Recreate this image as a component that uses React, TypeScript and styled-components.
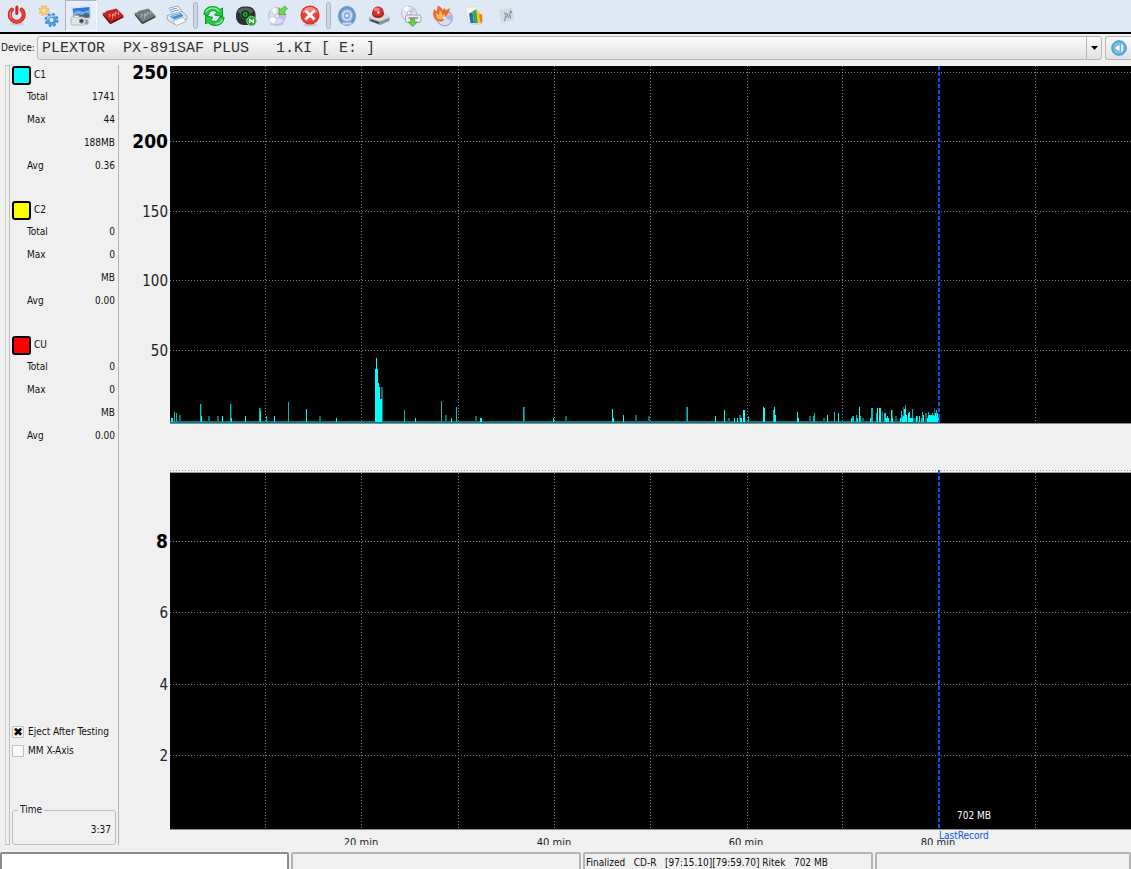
import React, { useState } from 'react';
import styled, { createGlobalStyle, css } from 'styled-components';

const UI_FONT = '"DejaVu Sans Condensed", "Noto Sans", "Open Sans", sans-serif';

const GlobalStyle = createGlobalStyle`
  *, *::before, *::after { box-sizing: border-box; }
  body {
    margin: 0;
    background: #f0f0f0;
    color: #111;
    font: 10px/14px ${UI_FONT};
    overflow: hidden;
  }
  button, select, input { font: inherit; color: inherit; }
`;

const Window = styled.div`
  display: flex;
  flex-direction: column;
  height: 100vh;
`;

const Toolbar = styled.header`
  display: flex;
  flex: none;
  height: 34px;
  padding: 0 1px;
  background: #dfe8f5;
  border-bottom: 2px solid #000;
`;

const ToolButton = styled.button<{ $pressed?: boolean }>`
  display: flex;
  align-items: center;
  justify-content: center;
  width: 32px;
  height: 31px;
  padding: 0;
  border: 1px solid transparent;
  background: none;
  ${(p) =>
    p.$pressed &&
    css`
      background: #e6edf7;
      border-color: #a9b3c0 #f6f9fd #f6f9fd #a9b3c0;
    `}
  svg { display: block; }
`;

const Separator = styled.span`
  width: 5px;
  height: 27px;
  margin-top: 2px;
  border: 1px solid #aab4c2;
  border-radius: 3px;
  background: #ccd6e4;
`;

const DeviceRow = styled.div`
  display: flex;
  flex: none;
  align-items: center;
  height: 31px;
  padding: 0 0 3px 1px;
  gap: 3px;
`;

const DeviceLabel = styled.label`
  width: 33px;
  white-space: nowrap;
`;

const SelectFrame = styled.div`
  display: flex;
  position: relative;
  flex: 1;
  height: 24px;
  border: 1px solid #b6b6b6;
  border-radius: 3px;
  background: linear-gradient(#fafafa, #e2e2e2);
`;

const DeviceSelect = styled.select`
  flex: 1;
  padding: 2px 20px 0 4px;
  border: 0;
  outline: 0;
  appearance: none;
  background: none;
  color: #333;
  font: 15px/20px "Liberation Mono", monospace;
`;

const SelectArrow = styled.span`
  position: absolute;
  top: 0;
  right: 0;
  bottom: 0;
  display: flex;
  align-items: center;
  justify-content: center;
  width: 15px;
  border-left: 1px solid #b6b6b6;
  pointer-events: none;
`;

const BackButton = styled.button`
  display: flex;
  align-items: center;
  width: 26px;
  height: 24px;
  padding: 0 0 0 5px;
  border: 1px solid #b6b6b6;
  border-right: 0;
  border-radius: 3px 0 0 3px;
  background: linear-gradient(#fafafa, #e2e2e2);
`;

const Main = styled.main`
  display: flex;
  flex: 1;
  min-height: 0;
  padding-bottom: 7px;
`;

const Grip = styled.div`
  flex: none;
  width: 5px;
  margin-left: 5px;
  border: 1px solid #bcbcbc;
  border-left-color: #cfcfcf;
`;

const Sidebar = styled.aside`
  display: flex;
  flex: none;
  flex-direction: column;
  width: 109px;
  padding: 0 2px;
  border-right: 1px solid #b4b4b4;
`;

const Group = styled.section`
  margin-bottom: 23px;
`;

const GroupHead = styled.div`
  display: flex;
  align-items: center;
  gap: 3px;
  height: 20px;
`;

const Swatch = styled.button<{ $color: string }>`
  width: 19px;
  height: 19px;
  padding: 0;
  border: 2px solid #000;
  border-radius: 3px;
  background: ${(p) => p.$color};
`;

const StatRow = styled.div`
  display: flex;
  align-items: center;
  justify-content: space-between;
  height: 23px;
  padding: 0 1px 0 15px;
`;

const Spacer = styled.div`
  flex: 1;
`;

const CheckLabel = styled.label`
  display: flex;
  align-items: center;
  gap: 4px;
  height: 19px;
  white-space: nowrap;
`;

const CheckBox = styled.input`
  display: grid;
  place-content: center;
  width: 12px;
  height: 12px;
  margin: 0;
  border: 1px solid #c0c0c0;
  border-radius: 1px;
  appearance: none;
  background: #fafafa;
  &:checked::after {
    content: '✖';
    font: 12px/10px "DejaVu Sans", sans-serif;
    color: #000;
  }
`;

const TimeBox = styled.fieldset`
  height: 41px;
  margin: 44px 0 0;
  padding: 7px 4px 0;
  border: 1px solid #bdbdbd;
  border-radius: 3px;
  text-align: right;
`;

const TimeLegend = styled.legend`
  margin-left: 1px;
  padding: 0 2px;
  line-height: 12px;
  text-align: left;
`;

const Charts = styled.div`
  display: flex;
  flex: 1;
  flex-direction: column;
  min-width: 0;
`;

const Plot = styled.svg<{ $grow?: boolean }>`
  display: block;
  width: 100%;
  height: 405px;
  flex: ${(p) => (p.$grow ? '1 1 0' : 'none')};
  min-height: 0;
  overflow: hidden;
  font-family: ${UI_FONT};
`;

const StatusBar = styled.footer`
  display: grid;
  flex: none;
  grid-template-columns: 289px 290px 290px 1fr;
  gap: 2px;
  height: 17px;
  overflow: hidden;
`;

const StatusCell = styled.div<{ $field?: boolean }>`
  height: 20px;
  padding: 2px 1px 0;
  border: 2px solid #b4b4b4;
  border-radius: 2px;
  background: ${(p) => (p.$field ? '#fff' : '#f0f0f0')};
  ${(p) => p.$field && 'border-color: #8c8c8c;'}
  line-height: 14px;
  white-space: pre;
`;

/* ---------- toolbar icons ---------- */

const Ic = ({ children }: { children: React.ReactNode }) => (
  <svg width="22" height="22" viewBox="0 0 22 22" fill="none" aria-hidden="true">{children}</svg>
);

const PowerIcon = () => (
  <Ic>
    <ellipse cx="11" cy="19" rx="7" ry="1.500" fill="#c4ccd8" />
    <path d="M6 4.500A7 7 0 1 0 15.500 4.500" stroke="#c51c14" strokeWidth="4" strokeLinecap="round" />
    <path d="M6 4.500A7 7 0 1 0 15.500 4.500" stroke="#ee3f34" strokeWidth="2.600" strokeLinecap="round" />
    <path d="M4.500 7A7 7 0 0 0 5 13" stroke="#fa9a90" strokeWidth="1" strokeLinecap="round" />
    <path d="M10.800 2v6.500" stroke="#dfe8f5" strokeWidth="5" strokeLinecap="round" />
    <path d="M10.800 2v6.500" stroke="#d8281e" strokeWidth="3" strokeLinecap="round" />
  </Ic>
);

const GearsIcon = () => (
  <Ic>
    <circle cx="6" cy="5.500" r="4.400" stroke="#f2b24a" strokeWidth="1.800" strokeDasharray="2 1.455" />
    <circle cx="6" cy="5.500" r="2.800" stroke="#fac76a" strokeWidth="2.400" />
    <circle cx="13.500" cy="15" r="6" stroke="#3a86d4" strokeWidth="2" strokeDasharray="2.700 2.010" />
    <circle cx="13.500" cy="15" r="3.700" stroke="#4f9ce6" strokeWidth="3.400" />
    <path d="M9.600 14A4 4 0 0 1 15 11.300" stroke="#a5d2f8" strokeWidth="1.600" strokeLinecap="round" />
    <circle cx="13.500" cy="15" r="1.700" fill="#e6eef8" />
  </Ic>
);

const ScreenIcon = () => (
  <Ic>
    <path d="M1.500 2.500L20.500 1V13.500L3 15Z" fill="#f7fafd" stroke="#c3cfdd" strokeWidth="0.600" />
    <path d="M2.500 3.500L19.500 2V12.500L4 14Z" fill="#2f78d4" />
    <path d="M3 7.500L8 5.500L13 7L19.500 5V9.500L3.600 11.500Z" fill="#79b0ea" />
    <path d="M3.600 11L8 9L12 10L16 7.500L19.500 9V12.500L4 14Z" fill="#51657a" />
    <path d="M14 14.500H18.500V19.500H14Z" fill="#9da2a8" />
    <rect x="1" y="12" width="13.500" height="8" rx="1.500" fill="#e2e4e6" stroke="#a2a6ab" strokeWidth="0.700" />
    <path d="M4 12V10.500H9V12" fill="#eceeef" stroke="#a2a6ab" strokeWidth="0.700" />
    <circle cx="11.500" cy="16" r="3.200" fill="#8a9096" stroke="#f0f1f2" strokeWidth="1" />
    <circle cx="11.500" cy="16" r="1.500" fill="#33383d" />
  </Ic>
);

const ChipIcon = ({ top, side, mark }: { top: string; side: string; mark: string }) => (
  <Ic>
    <path d="M0.500 8L9 16L21.500 10.500V12.500L9 19L7.500 18.500L1 10.500Z" fill={side} />
    <path d="M0.500 7.500Q3.500 8.500 4.500 6L14.500 3.500L21.500 10.500L8.500 17Z" fill={top} />
    <path d="M8.500 9l-1.700.6l1.800 1.200l-1.600.8M10.500 13.500V9l1.700.500l-1.500 1.500M13 11.500V7.500l1.800.300l-1 1.200M16.500 6.500V10" stroke={mark} strokeWidth="0.800" />
  </Ic>
);

const PrinterIcon = () => (
  <Ic>
    <path d="M3 3L12 1L17 8L8 11Z" fill="#f7fafd" stroke="#7e98b8" strokeWidth="0.800" />
    <path d="M5 4.500L11 3.200M6 6.500L13 4.800" stroke="#6a9bd4" strokeWidth="1" />
    <path d="M1 10.500L16 6.500L21 11V14L9 19.500L1.500 15Z" fill="#dde4ed" stroke="#8e9db0" strokeWidth="0.800" />
    <path d="M4 11.200L14.500 8L17.500 11L8 14.500Z" fill="#3e93de" />
    <path d="M6 11.500L14 9" stroke="#9accf6" strokeWidth="1" />
    <path d="M7 16L17 12.200L20 16.500L10 20.500Z" fill="#f9fbfd" stroke="#9aa8ba" strokeWidth="0.800" />
  </Ic>
);

const RefreshIcon = () => (
  <Ic>
    <g stroke="#0a8a22" strokeWidth="0.900" fill="#22cf3c" strokeLinejoin="round">
      <path d="M0.800 9.500Q1.500 1.500 9.500 1.500Q14.500 1.500 17 4.500L19.500 3V11.500L11.500 10L14 7.500Q12 5 9 5.500Q6 6 5 10.500Z" />
      <path d="M21.200 12.500Q20 20.500 12 20.500Q7.500 20.500 5 17.500L2.500 19V10.500L10 12.500L7.800 14.500Q9.500 17 12.500 16.500Q15.500 16 17 11.500Z" />
    </g>
    <path d="M3 7Q5 3 9.500 3Q13.500 3 16 6M19.500 14.500Q17.500 19 12.500 19" stroke="#a5f7ac" strokeWidth="1.100" />
  </Ic>
);

const BlackDiscIcon = () => (
  <Ic>
    <rect x="1" y="1.500" width="19.500" height="18.500" rx="8" fill="#2c2f31" />
    <path d="M2.500 7Q4 2.500 10.500 2.500Q16.500 2.500 18.500 7L10.500 10Z" fill="#5d6164" />
    <circle cx="10.300" cy="9.500" r="4.600" fill="#14301a" stroke="#1d7d2b" strokeWidth="1" />
    <circle cx="10.300" cy="9.500" r="2.400" fill="#2fae40" />
    <circle cx="10.300" cy="9.500" r="0.900" fill="#0d2612" />
    <circle cx="16.500" cy="16" r="4.800" fill="#2fa53b" stroke="#8ed295" strokeWidth="0.900" />
    <path d="M14.800 18V14.500L18.300 17.500V14" stroke="#fff" strokeWidth="1.200" />
  </Ic>
);

const DiscArrowIcon = () => (
  <Ic>
    <ellipse cx="10" cy="19" rx="7" ry="1.800" fill="#c0c8d6" />
    <circle cx="10" cy="11" r="8.500" fill="#dddcf3" stroke="#b4b2d0" strokeWidth="0.900" />
    <path d="M10 11L2 14A8.500 8.500 0 0 0 7 19Z" fill="#fff" />
    <path d="M10 11L18 9A8.500 8.500 0 0 1 17 16Z" fill="#c0bfe9" />
    <path d="M10 11L4 5A8.500 8.500 0 0 1 9 2.500Z" fill="#f6f6fd" />
    <circle cx="10" cy="11" r="2.200" fill="#f4f5fb" stroke="#a5a4c2" strokeWidth="0.900" />
    <path d="M20.500 3.500L17 7L18.800 9.500H12V3L13.800 4.700L17.500 1Z" fill="#6fd84e" stroke="#48a834" strokeWidth="0.800" />
  </Ic>
);

const StopIcon = () => (
  <Ic>
    <ellipse cx="11" cy="20" rx="7" ry="1.500" fill="#c0c8d6" />
    <circle cx="11" cy="10" r="9.500" fill="#d42a1c" />
    <circle cx="11" cy="10" r="8.500" fill="#ea4332" />
    <path d="M3 8Q5 2 11 2Q17 2 19 8Q11 5 3 8Z" fill="#f58a7a" />
    <path d="M7.500 6.500L14.500 13.500M14.500 6.500L7.500 13.500" stroke="#fff" strokeWidth="3" strokeLinecap="square" />
  </Ic>
);

const BlueDiscIcon = () => (
  <Ic>
    <ellipse cx="11" cy="11" rx="9" ry="10" fill="#6795ce" />
    <ellipse cx="11" cy="10.500" rx="6.500" ry="7" fill="#86aad8" />
    <ellipse cx="11" cy="10.500" rx="4.200" ry="4.500" stroke="#c9dbef" strokeWidth="2.200" fill="#86aad8" />
    <circle cx="11" cy="10.500" r="1.600" fill="#e4eef8" />
    <path d="M6 17.500H16L15 19.500H7Z" fill="#cfdff0" />
  </Ic>
);

const DriveIcon = () => (
  <Ic>
    <path d="M1 13L6 8.500H17L21.500 12.500V16L12 20L1 16Z" fill="#8e9297" />
    <path d="M1 13L6 8.500H17L21.500 12.500L12 16.500Z" fill="#d8dadd" />
    <path d="M3 15.300L11 18" stroke="#3c4044" strokeWidth="1.400" />
    <ellipse cx="10" cy="8.500" rx="6" ry="4.500" fill="#a31d20" />
    <ellipse cx="10" cy="6.500" rx="5.500" ry="5" fill="#d42c30" />
    <ellipse cx="8.800" cy="4.500" rx="3" ry="1.900" fill="#ee7d7a" />
    <circle cx="10.500" cy="7.500" r="1.500" fill="#f4c9c9" />
  </Ic>
);

const DiscDownIcon = () => (
  <Ic>
    <circle cx="9" cy="8.500" r="7.500" fill="#e6e6f3" stroke="#b4b5c8" strokeWidth="0.900" />
    <path d="M9 8.500L3 4A7.500 7.500 0 0 1 8 1Z" fill="#fff" />
    <path d="M9 8.500L16 6A7.500 7.500 0 0 0 12 1.700Z" fill="#cdccec" />
    <circle cx="9" cy="8" r="2" fill="#f8f8fc" stroke="#aaaac2" strokeWidth="0.900" />
    <rect x="5.500" y="10" width="15.500" height="7.500" rx="2" fill="#eceef2" stroke="#9aa0aa" strokeWidth="0.900" />
    <path d="M8.500 13H18" stroke="#6b717c" strokeWidth="1.200" />
    <path d="M10.700 14H14.700V17H17.500L12.700 21.500L8 17H10.700Z" fill="#6ad04a" stroke="#46a030" strokeWidth="0.800" />
  </Ic>
);

const BurnIcon = () => (
  <Ic>
    <circle cx="12.500" cy="13" r="7.800" fill="#dcdcf0" stroke="#8c8cae" strokeWidth="0.900" />
    <path d="M12.500 13L19 9A7.800 7.800 0 0 1 19.500 16Z" fill="#b6b6e0" />
    <path d="M2.500 13.500Q0 9 2 4L4.500 6.500Q6 3 5.500 0.500Q10 2 10.500 5.500L12.500 3L14 5.500L17.500 3Q18 8 14.500 10.500Q14 15 9.500 16.500Q5 17 2.500 13.500Z" fill="#f0692c" />
    <path d="M4.500 12.500Q3.500 10 4.500 8L7 10Q8 7 7.500 4.500Q10.500 7.500 10 10.500L13 8.500Q12.500 12.500 10 14Q6.500 15.500 4.500 12.500Z" fill="#fcb868" />
    <circle cx="12.500" cy="13" r="1.700" fill="#fff" stroke="#a9a9c6" strokeWidth="0.600" />
  </Ic>
);

const BarsIcon = () => (
  <Ic>
    <path d="M1.500 2.500L12.500 1.500L14.500 17L4.500 18.500Z" fill="#f6f9ee" stroke="#d0d9df" strokeWidth="0.800" />
    <path d="M5 8.500L8.500 7L10 18H6.500Z" fill="#2469cc" />
    <path d="M8.500 6L12.500 4.500L14 18H10Z" fill="#45a83a" />
    <path d="M12.500 6.500L15.500 6L17 17.500L14 18Z" fill="#f4cc38" />
    <path d="M15 9.500L18 9L18.500 17L16.500 18Z" fill="#ee7a1c" />
    <path d="M6.500 18H18.500L17 20H8.500Z" fill="#ccd4de" />
  </Ic>
);

const ScriptIcon = () => (
  <Ic>
    <path d="M3 4.500L16 3L18.500 15L5 18.500Z" fill="#d3dbe1" />
    <path d="M8 9q2.500-3 2 1l-1.500 6M9 12.500q2.500 0 3-4M12 13.500q2.500-4 2.500-8M14.500 13.500v-3M14 7q2-2 1.500 1" stroke="#7b8893" strokeWidth="1" />
  </Ic>
);

const TOOLS: Array<null | { name: string; icon: React.ReactNode; pressed?: boolean }> = [
  { name: 'Quit', icon: <PowerIcon /> },
  { name: 'Settings', icon: <GearsIcon /> },
  { name: 'Screenshot', icon: <ScreenIcon />, pressed: true },
  { name: 'Red chip', icon: <ChipIcon top="#c4221d" side="#6f0f0c" mark="#f4b0a8" /> },
  { name: 'Grey chip', icon: <ChipIcon top="#777b7e" side="#45484a" mark="#b8bcc0" /> },
  { name: 'Print', icon: <PrinterIcon /> },
  null,
  { name: 'Refresh', icon: <RefreshIcon /> },
  { name: 'Disc info', icon: <BlackDiscIcon /> },
  { name: 'Load disc', icon: <DiscArrowIcon /> },
  { name: 'Stop', icon: <StopIcon /> },
  null,
  { name: 'Disc', icon: <BlueDiscIcon /> },
  { name: 'Drive', icon: <DriveIcon /> },
  { name: 'Read disc', icon: <DiscDownIcon /> },
  { name: 'Burn', icon: <BurnIcon /> },
  { name: 'Graph', icon: <BarsIcon /> },
  { name: 'Script', icon: <ScriptIcon /> },
];

/* ---------- chart data ---------- */

const BRIGHT = '#00ffff';
const MID = '#00bebe';
const DIM = '#007474';

// [x, height, width, shade]; x is counted from the left edge of the plot
type Bar = [number, number, number, string];
const BARS: Bar[] = [
  [1, 4, 2, BRIGHT], [4, 10, 1, MID], [6, 9, 1, MID], [9, 7, 2, DIM],
  [30, 18, 1, MID], [31, 18, 1, '#004444'], [31, 6, 1, BRIGHT], [38, 6, 2, DIM], [47, 6, 2, DIM], [52, 6, 1, BRIGHT],
  [60, 18, 1, MID], [61, 18, 1, '#004444'], [61, 4, 1, BRIGHT], [75, 6, 1, BRIGHT], [89, 14, 1, MID], [90, 14, 1, DIM],
  [90, 11, 1, BRIGHT], [96, 6, 1, MID], [104, 6, 1, BRIGHT], [118, 20, 1, MID], [136, 13, 1, BRIGHT],
  [149, 6, 2, DIM], [166, 4, 1, BRIGHT],
  [205, 53, 1, BRIGHT], [206, 64, 1, BRIGHT], [207, 53, 1, BRIGHT], [208, 39, 1, BRIGHT], [209, 35, 1, BRIGHT],
  [211, 35, 2, DIM], [210, 23, 2, BRIGHT],
  [234, 12, 1, MID], [245, 4, 1, BRIGHT], [271, 21, 1, MID], [275, 7, 2, DIM], [281, 4, 1, BRIGHT],
  [286, 15, 1, MID], [305, 6, 2, DIM], [310, 4, 2, BRIGHT],
  [353, 15, 1, MID], [354, 15, 1, DIM], [383, 4, 1, BRIGHT], [395, 6, 2, DIM],
  [442, 13, 1, BRIGHT], [443, 4, 1, BRIGHT], [453, 7, 1, BRIGHT], [465, 7, 2, DIM], [478, 6, 2, DIM],
  [516, 15, 1, DIM], [517, 15, 1, MID], [545, 6, 1, BRIGHT], [554, 12, 1, BRIGHT], [558, 4, 2, DIM],
  [564, 4, 1, BRIGHT], [567, 4, 1, BRIGHT], [569, 7, 2, DIM], [570, 4, 2, BRIGHT], [573, 12, 2, BRIGHT], [578, 6, 1, MID],
  [593, 15, 1, BRIGHT], [594, 14, 1, BRIGHT], [603, 12, 1, MID], [604, 15, 1, BRIGHT], [605, 7, 1, BRIGHT],
  [627, 10, 1, BRIGHT], [628, 4, 1, BRIGHT], [639, 6, 2, DIM], [643, 6, 1, MID], [644, 9, 1, MID],
  [653, 4, 2, DIM], [657, 7, 1, BRIGHT], [664, 10, 1, MID], [668, 9, 1, BRIGHT],
  [681, 4, 1, BRIGHT], [682, 6, 2, MID], [686, 7, 1, MID], [687, 4, 1, BRIGHT], [689, 15, 1, BRIGHT], [690, 6, 1, MID], [692, 4, 2, DIM],
  [700, 4, 1, BRIGHT], [701, 14, 2, MID], [706, 9, 1, MID], [707, 14, 1, BRIGHT], [709, 14, 2, BRIGHT], [712, 10, 1, DIM],
  [714, 9, 1, MID], [715, 9, 1, BRIGHT], [716, 4, 1, BRIGHT], [717, 6, 1, BRIGHT], [718, 4, 1, BRIGHT],
  [721, 12, 1, BRIGHT], [722, 12, 1, DIM], [722, 4, 1, BRIGHT], [725, 6, 2, DIM],
  [730, 4, 1, BRIGHT], [731, 11, 1, MID], [732, 7, 1, MID], [732, 4, 2, BRIGHT], [733, 15, 1, DIM], [734, 13, 1, BRIGHT], [735, 17, 1, MID],
  [733, 6, 1, BRIGHT], [735, 13, 1, BRIGHT],
  [736, 7, 1, BRIGHT], [738, 9, 1, BRIGHT], [739, 10, 1, BRIGHT], [740, 4, 1, BRIGHT], [742, 13, 1, MID], [741, 4, 2, BRIGHT],
  [743, 4, 4, DIM], [746, 6, 1, BRIGHT], [747, 6, 1, MID], [749, 6, 1, BRIGHT], [751, 4, 1, MID], [752, 10, 1, MID], [753, 7, 1, BRIGHT],
  [755, 9, 2, DIM], [757, 4, 1, BRIGHT], [758, 10, 1, MID], [759, 7, 4, BRIGHT], [762, 9, 1, MID], [763, 7, 6, BRIGHT],
  [764, 14, 1, DIM], [765, 9, 1, BRIGHT], [766, 12, 1, MID], [767, 9, 1, BRIGHT], [758, 6, 10, BRIGHT],
];

const LEFT = 51;
const VERTICALS = [146, 242, 339, 435, 531, 628, 723, 916];
const RECORD_X = 820;

interface YTick {
  y: number;
  text: string;
  bold?: boolean;
}

const UPPER: YTick[] = [
  { y: 7, text: '250', bold: true },
  { y: 76, text: '200', bold: true },
  { y: 146, text: '150' },
  { y: 215, text: '100' },
  { y: 285, text: '50' },
];

const LOWER: YTick[] = [
  { y: 71, text: '8', bold: true },
  { y: 142, text: '6' },
  { y: 214, text: '4' },
  { y: 285, text: '2' },
];

const X_TICKS = [
  { x: 242, text: '20 min' },
  { x: 435, text: '40 min' },
  { x: 627, text: '60 min' },
  { x: 819, text: '80 min' },
];

const Grid = ({ ticks, top, bottom }: { ticks: YTick[]; top: number; bottom: number }) => (
  <>
    <rect x={LEFT} y={top} width="100%" height={bottom - top} fill="#000" />
    <g stroke="#7c7c7c" strokeDasharray="1 2" shapeRendering="crispEdges">
      {ticks.map((t) => (
        <line key={t.text} x1={LEFT} x2="100%" y1={t.y + 0.5} y2={t.y + 0.5} />
      ))}
      {VERTICALS.map((x) => (
        <line key={x} x1={x + 0.5} x2={x + 0.5} y1={top} y2={bottom} />
      ))}
    </g>
    <line x1={LEFT} x2="100%" y1={bottom + 0.5} y2={bottom + 0.5} stroke="#8a8a8a" />
    {ticks.map((t) => (
      <text
        key={t.text}
        x={LEFT - 2}
        y={t.bold ? t.y + 7 : t.y + 6}
        textAnchor="end"
        fontSize={t.bold ? 19 : 15}
        fontWeight={t.bold ? 700 : 400}
        fill={t.bold ? '#000' : '#222'}
      >
        {t.text}
      </text>
    ))}
  </>
);

const RecordLine = ({ top, bottom }: { top: number; bottom: number }) => (
  <line x1={RECORD_X} x2={RECORD_X} y1={top} y2={bottom} stroke="#0a55f0" strokeWidth="2" strokeDasharray="4 2" />
);

const GROUPS = [
  { name: 'C1', color: '#00ffff', total: '1741', max: '44', at: '188MB', avg: '0.36' },
  { name: 'C2', color: '#ffff00', total: '0', max: '0', at: 'MB', avg: '0.00' },
  { name: 'CU', color: '#ff0000', total: '0', max: '0', at: 'MB', avg: '0.00' },
];

export default function App() {
  const [eject, setEject] = useState(true);
  const [mmAxis, setMmAxis] = useState(false);

  return (
    <Window>
      <GlobalStyle />
      <Toolbar>
        {TOOLS.map((tool, i) =>
          tool ? (
            <ToolButton key={tool.name} $pressed={tool.pressed} aria-label={tool.name}>
              {tool.icon}
            </ToolButton>
          ) : (
            <Separator key={i} />
          ),
        )}
      </Toolbar>

      <DeviceRow>
        <DeviceLabel htmlFor="device">Device:</DeviceLabel>
        <SelectFrame>
          <DeviceSelect id="device">
            <option>{'PLEXTOR\u00a0\u00a0PX-891SAF PLUS\u00a0\u00a0\u00a01.KI [ E: ]'}</option>
          </DeviceSelect>
          <SelectArrow>
            <svg width="7" height="4" viewBox="0 0 7 4" aria-hidden="true"><path d="M0 0H7L3.500 4Z" fill="#000" /></svg>
          </SelectArrow>
        </SelectFrame>
        <BackButton aria-label="Back">
          <svg width="16" height="16" viewBox="0 0 16 16" aria-hidden="true">
            <circle cx="8" cy="8" r="7.300" fill="#58aee6" stroke="#4a93cc" />
            <circle cx="8" cy="8" r="5.500" fill="#7cc2f0" />
            <path d="M9 4V12L2.800 8Z" fill="#fff" stroke="#3a86c4" strokeWidth="0.600" />
            <path d="M11 4.500V11.500" stroke="#fff" strokeWidth="1.500" />
          </svg>
        </BackButton>
      </DeviceRow>

      <Main>
        <Grip />
        <Sidebar>
          {GROUPS.map((g) => (
            <Group key={g.name}>
              <GroupHead>
                <Swatch $color={g.color} aria-label={`${g.name} colour`} />
                <span>{g.name}</span>
              </GroupHead>
              <StatRow><span>Total</span><span>{g.total}</span></StatRow>
              <StatRow><span>Max</span><span>{g.max}</span></StatRow>
              <StatRow><span /><span>{g.at}</span></StatRow>
              <StatRow><span>Avg</span><span>{g.avg}</span></StatRow>
            </Group>
          ))}
          <Spacer />
          <CheckLabel>
            <CheckBox type="checkbox" checked={eject} onChange={(e) => setEject(e.target.checked)} />
            Eject After Testing
          </CheckLabel>
          <CheckLabel>
            <CheckBox type="checkbox" checked={mmAxis} onChange={(e) => setMmAxis(e.target.checked)} />
            MM X-Axis
          </CheckLabel>
          <TimeBox>
            <TimeLegend>Time</TimeLegend>
            3:37
          </TimeBox>
        </Sidebar>

        <Charts>
          <Plot role="img" aria-label="Error counts">
            <Grid ticks={UPPER} top={1} bottom={358} />
            <rect x={LEFT} y="356" width={RECORD_X - LEFT} height="2" fill="#007c7c" />
            <g shapeRendering="crispEdges">
              {BARS.map(([x, h, w, shade], i) => (
                <rect key={i} x={LEFT + x} y={357 - h} width={w} height={h} fill={shade} />
              ))}
            </g>
            <RecordLine top={1} bottom={358} />
          </Plot>
          <Plot $grow role="img" aria-label="Speed">
            <line x1={LEFT} x2="100%" y1="0.5" y2="0.5" stroke="#9c9c9c" strokeDasharray="1 2" />
            <line x1={LEFT} x2="100%" y1="2.5" y2="2.5" stroke="#9c9c9c" />
            <Grid ticks={LOWER} top={3} bottom={359} />
            <RecordLine top={0} bottom={359} />
            {X_TICKS.map((t) => (
              <text key={t.text} x={t.x} y="376" textAnchor="middle" fontSize="11" fill="#222">{t.text}</text>
            ))}
            <text x="838" y="349" fontSize="10" fill="#fff">702 MB</text>
            <text x="820" y="369" fontSize="10" fill="#0a55f0">LastRecord</text>
          </Plot>
        </Charts>
      </Main>

      <StatusBar>
        <StatusCell $field role="progressbar" aria-label="Progress" />
        <StatusCell />
        <StatusCell>{'Finalized   CD-R   [97:15.10][79:59.70] Ritek   702 MB'}</StatusCell>
        <StatusCell />
      </StatusBar>
    </Window>
  );
}
